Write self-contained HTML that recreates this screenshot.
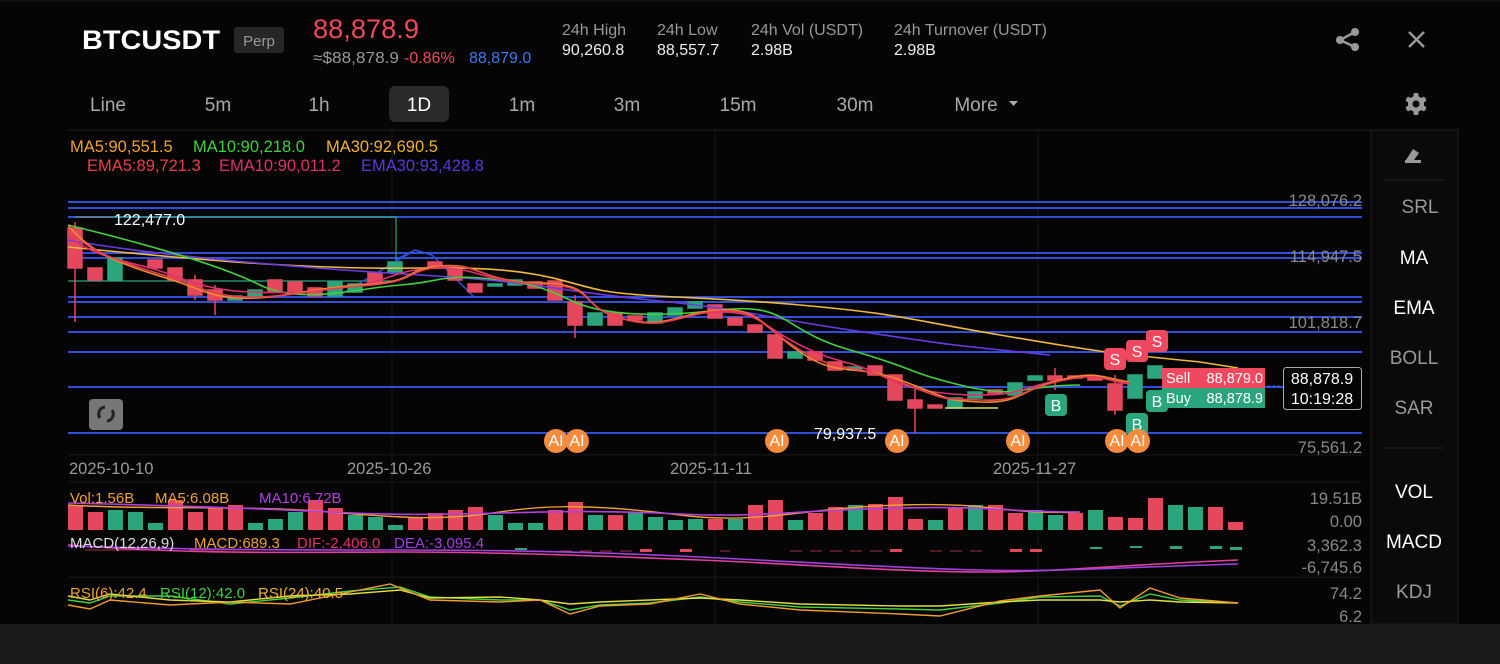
<!DOCTYPE html>
<html><head><meta charset="utf-8"><style>
html,body{margin:0;padding:0;background:#050505;width:1500px;height:664px;overflow:hidden;font-family:"Liberation Sans",Arial,sans-serif}
svg{position:absolute;left:0;top:0}
</style></head><body>
<svg width="1500" height="664" viewBox="0 0 1500 664" font-family="Liberation Sans, Arial, sans-serif">
<rect width="1500" height="664" fill="#050505"/>
<rect x="0" y="624" width="1500" height="40" fill="#1b1b1b"/>
<line x1="0" y1="1" x2="1500" y2="1" stroke="#1c1c1c"/>
<!-- header -->
<text x="82" y="49" font-size="27" font-weight="bold" fill="#fff" textLength="138" lengthAdjust="spacingAndGlyphs">BTCUSDT</text>
<rect x="234" y="27" width="50" height="26" rx="3" fill="#262626"/>
<text x="259" y="46" font-size="15" fill="#999" text-anchor="middle">Perp</text>
<text x="313" y="38" font-size="27" fill="#f0485e" textLength="106" lengthAdjust="spacingAndGlyphs">88,878.9</text>
<text x="313" y="63" font-size="16" fill="#999" textLength="86" lengthAdjust="spacingAndGlyphs">≈$88,878.9</text>
<text x="404" y="63" font-size="16" fill="#f0485e">-0.86%</text>
<text x="469" y="63" font-size="16" fill="#3b7cf0">88,879.0</text>
<g font-size="16"><text x="562" y="35" fill="#999">24h High</text><text x="562" y="55" fill="#eee">90,260.8</text>
<text x="657" y="35" fill="#999">24h Low</text><text x="657" y="55" fill="#eee">88,557.7</text>
<text x="751" y="35" fill="#999">24h Vol (USDT)</text><text x="751" y="55" fill="#eee">2.98B</text>
<text x="894" y="35" fill="#999">24h Turnover (USDT)</text><text x="894" y="55" fill="#eee">2.98B</text></g>
<g fill="#999" stroke="#999"><circle cx="1355" cy="32" r="4" stroke="none"/><circle cx="1355" cy="47" r="4" stroke="none"/><circle cx="1340" cy="40" r="4" stroke="none"/><path d="M1355 32L1340 40L1355 47" stroke-width="2.5" fill="none"/></g>
<path d="M1409 32L1424 47M1424 32L1409 47" stroke="#999" stroke-width="2.5"/>
<!-- tabs -->
<rect x="389" y="86" width="60" height="36" rx="6" fill="#2a2a2a"/>
<g font-size="19" fill="#aaa" text-anchor="middle"><text x="108" y="111">Line</text><text x="218" y="111">5m</text><text x="319" y="111">1h</text><text x="419" y="111" fill="#fff">1D</text><text x="522" y="111">1m</text><text x="627" y="111">3m</text><text x="738" y="111">15m</text><text x="855" y="111">30m</text><text x="976" y="111">More</text></g>
<path d="M1009 101h9l-4.5 5z" fill="#aaa"/>
<g transform="translate(1416,104)" fill="#999"><circle r="8"/><g><rect x="-2.5" y="-11" width="5" height="22" rx="1.5"/><rect x="-2.5" y="-11" width="5" height="22" rx="1.5" transform="rotate(60)"/><rect x="-2.5" y="-11" width="5" height="22" rx="1.5" transform="rotate(120)"/></g><circle r="3.5" fill="#050505"/></g>
<!-- panels -->
<line x1="68" y1="130" x2="1458" y2="130" stroke="#1e1e1e"/>
<rect x="1371" y="130" width="87" height="494" fill="#0a0a0a" stroke="#1e1e1e"/>
<line x1="1384" y1="180" x2="1444" y2="180" stroke="#222"/>
<line x1="1384" y1="448" x2="1444" y2="448" stroke="#222"/>
<path d="M1406 160l7-11 6 4-5 7zM1405 160h16v3h-16z" fill="#999"/>
<g font-size="19" text-anchor="middle" fill="#999"><text x="1420" y="213">SRL</text><text x="1414" y="264" fill="#fff">MA</text><text x="1414" y="314" fill="#fff">EMA</text><text x="1414" y="364">BOLL</text><text x="1414" y="414">SAR</text><text x="1414" y="498" fill="#fff">VOL</text><text x="1414" y="548" fill="#fff">MACD</text><text x="1414" y="598">KDJ</text></g>
<g stroke="#161616"><line x1="392" y1="130" x2="392" y2="624"/><line x1="715" y1="130" x2="715" y2="624"/><line x1="1038" y1="130" x2="1038" y2="624"/><line x1="68" y1="455" x2="1362" y2="455"/><line x1="68" y1="482" x2="1362" y2="482"/><line x1="68" y1="577" x2="1362" y2="577"/></g>
<!-- legends -->
<g font-size="16.5"><text x="70" y="152" fill="#f0a030">MA5:90,551.5</text><text x="193" y="152" fill="#40d040">MA10:90,218.0</text><text x="326" y="152" fill="#f0b030">MA30:92,690.5</text>
<text x="87" y="171" fill="#e8404a">EMA5:89,721.3</text><text x="219" y="171" fill="#e03070">EMA10:90,011.2</text><text x="361" y="171" fill="#5a38d8">EMA30:93,428.8</text></g>
<!-- blue lines -->
<g stroke="#2f4fd8" stroke-width="2"><line x1="68" y1="202" x2="1362" y2="202"/><line x1="68" y1="208" x2="1362" y2="208"/><line x1="68" y1="217" x2="1362" y2="217"/><line x1="68" y1="253" x2="1362" y2="253"/><line x1="68" y1="258" x2="1362" y2="258"/><line x1="68" y1="297" x2="1362" y2="297"/><line x1="68" y1="302" x2="1362" y2="302"/><line x1="68" y1="317" x2="1362" y2="317"/><line x1="68" y1="332" x2="1362" y2="332"/><line x1="68" y1="352" x2="1362" y2="352"/><line x1="68" y1="387" x2="1362" y2="387"/><line x1="68" y1="433" x2="1362" y2="433"/></g>
<g font-size="16.5" fill="#888" text-anchor="end"><text x="1362" y="206">128,076.2</text><text x="1362" y="262">114,947.5</text><text x="1362" y="328">101,818.7</text><text x="1362" y="453">75,561.2</text><text x="1362" y="504">19.51B</text><text x="1362" y="527">0.00</text><text x="1362" y="551">3,362.3</text><text x="1362" y="573">-6,745.6</text><text x="1362" y="599">74.2</text><text x="1362" y="622">6.2</text></g>
<g font-size="16.5" fill="#999"><text x="69" y="474">2025-10-10</text><text x="347" y="474">2025-10-26</text><text x="670" y="474">2025-11-11</text><text x="993" y="474">2025-11-27</text></g>
<path d="M75 217H396V260M68 281H392" stroke="#2aa57e" fill="none" stroke-width="1.2"/>
<path d="M75 217H110" stroke="#888"/>
<text x="114" y="225" font-size="16" fill="#fff">122,477.0</text>
<path d="M335 298L415 250L395 260M415 250L432 255L475 298" stroke="#3050e0" fill="none" stroke-width="1.5"/>
<!-- candles -->
<g fill="#e5485d" stroke="#e5485d" stroke-width="1.5">
<line x1="75" y1="222" x2="75" y2="322"/><rect x="68" y="228" width="14" height="40"/>
<rect x="88" y="268" width="14" height="12"/><rect x="148" y="260" width="14" height="8"/><rect x="168" y="268" width="14" height="12"/>
<line x1="195" y1="275" x2="195" y2="300"/><rect x="188" y="280" width="14" height="15"/><line x1="215" y1="285" x2="215" y2="315"/><rect x="208" y="290" width="14" height="10"/>
<rect x="268" y="280" width="14" height="12"/><rect x="288" y="282" width="14" height="10"/><rect x="308" y="288" width="14" height="8"/><rect x="368" y="273" width="14" height="10"/>
<rect x="428" y="262" width="14" height="6"/><rect x="448" y="268" width="14" height="12"/><rect x="468" y="284" width="14" height="8"/><rect x="528" y="282" width="14" height="6"/>
<rect x="548" y="281" width="14" height="19"/><line x1="575" y1="295" x2="575" y2="338"/><rect x="568" y="302" width="14" height="23"/>
<rect x="608" y="313" width="14" height="12"/><rect x="628" y="316" width="14" height="4"/><rect x="708" y="305" width="14" height="13"/><rect x="728" y="318" width="14" height="7"/>
<rect x="748" y="325" width="14" height="7"/><rect x="768" y="335" width="14" height="23"/><rect x="808" y="352" width="14" height="8"/><rect x="828" y="362" width="14" height="8"/>
<rect x="868" y="366" width="14" height="9"/><rect x="888" y="375" width="14" height="25"/><line x1="915" y1="385" x2="915" y2="433"/><rect x="908" y="400" width="14" height="8"/>
<rect x="928" y="405" width="14" height="3"/><rect x="988" y="390" width="14" height="3"/><rect x="1048" y="376" width="14" height="4"/><line x1="1055" y1="368" x2="1055" y2="390"/>
<rect x="1068" y="376" width="14" height="2"/><rect x="1088" y="378" width="14" height="2"/><line x1="1115" y1="375" x2="1115" y2="415"/><rect x="1108" y="384" width="14" height="26"/></g>
<g fill="#2aa57e" stroke="#2aa57e" stroke-width="1.5">
<rect x="108" y="258" width="14" height="22"/><rect x="228" y="296" width="14" height="4"/><rect x="248" y="290" width="14" height="6"/><rect x="328" y="282" width="14" height="14"/>
<rect x="348" y="284" width="14" height="8"/><rect x="388" y="262" width="14" height="10"/><rect x="488" y="284" width="14" height="2"/><rect x="508" y="280" width="14" height="5"/>
<rect x="588" y="313" width="14" height="12"/><rect x="648" y="313" width="14" height="10"/><rect x="668" y="308" width="14" height="7"/><rect x="688" y="302" width="14" height="6"/>
<rect x="788" y="352" width="14" height="6"/><rect x="848" y="367" width="14" height="3"/><rect x="948" y="398" width="14" height="10"/><rect x="968" y="392" width="14" height="6"/>
<rect x="1008" y="383" width="14" height="12"/><rect x="1028" y="376" width="14" height="4"/><rect x="1128" y="375" width="14" height="23"/><rect x="1148" y="366" width="14" height="12"/></g>
<!-- MA lines -->
<g fill="none" stroke-width="1.6">
<path d="M68 247C180 258 300 270 420 268S560 282 600 290 700 296 800 305 900 318 1000 335 1100 352 1200 362L1238 368" stroke="#f0b93a"/>
<path d="M68 240C150 255 300 268 420 275S550 290 650 300 750 315 850 330 950 345 1050 355 1150 358L1238 363" stroke="#6a3ae8"/>
<path d="M68 225C150 245 220 265 260 285S360 288 400 285 440 275 480 278 540 285 570 300 650 318 720 310 780 330 850 350 900 370 960 385 1020 385 1080 385 1140 378L1200 372" stroke="#40d040"/>
<path d="M68 235C90 255 120 260 150 268S200 290 250 292 330 290 360 285 400 268 440 268 480 282 540 283 575 305 620 318 680 312 720 312 760 325 800 345 850 360 880 375 940 395 980 395 1020 388 1060 380 1100 380 1130 384 1160 376L1200 370" stroke="#e03070"/>
<path d="M68 225C100 265 150 270 200 290S300 288 360 285 400 270 440 266 480 282 540 283 575 305 620 318 680 312 720 310 760 325 800 352 850 362 900 380 940 400 980 402 1020 390 1060 380 1100 378 1130 382 1160 375L1200 370" stroke="#f08a30"/>
<path d="M68 230C100 262 150 268 200 288S300 290 360 286 400 272 440 267 480 282 540 284 575 304 620 318 680 313 720 311 760 326 800 350 850 362 900 382 940 398 980 400 1020 390 1060 381 1100 380 1130 383 1160 376L1200 371" stroke="#e8404a"/>
</g>
<path d="M945 408H998" stroke="#e0e060" stroke-width="1.5"/>
<path d="M1238 386H1280" stroke="#4a6fe0" stroke-dasharray="2 3"/>
<!-- markers -->
<g font-size="16" fill="#fff" text-anchor="middle">
<g fill="#f0485e"><rect x="1104" y="348" width="22" height="22" rx="4"/><rect x="1126" y="340" width="22" height="22" rx="4"/><rect x="1146" y="330" width="22" height="22" rx="4"/></g>
<text x="1115" y="365">S</text><text x="1137" y="357">S</text><text x="1157" y="347">S</text>
<g fill="#2aa57e"><rect x="1045" y="394" width="22" height="22" rx="4"/><rect x="1146" y="390" width="22" height="22" rx="4"/><rect x="1126" y="413" width="22" height="22" rx="4"/></g>
<text x="1056" y="411">B</text><text x="1157" y="407">B</text><text x="1137" y="430">B</text>
<g fill="#f58b3c"><circle cx="556" cy="441" r="12"/><circle cx="577" cy="441" r="12"/><circle cx="777" cy="441" r="12"/><circle cx="897" cy="441" r="12"/><circle cx="1018" cy="441" r="12"/><circle cx="1117" cy="441" r="12"/><circle cx="1138" cy="441" r="12"/></g>
<text x="556" y="446">AI</text><text x="577" y="446">AI</text><text x="777" y="446">AI</text><text x="897" y="446">AI</text><text x="1018" y="446">AI</text><text x="1117" y="446">AI</text><text x="1138" y="446">AI</text>
</g>
<text x="814" y="439" font-size="16" fill="#fff">79,937.5</text>
<rect x="1162" y="368" width="103" height="20" fill="#f0485e"/><rect x="1162" y="388" width="103" height="20" fill="#2aa57e"/>
<g font-size="14.5" fill="#fff"><text x="1166" y="383">Sell</text><text x="1263" y="383" text-anchor="end">88,879.0</text><text x="1166" y="403">Buy</text><text x="1263" y="403" text-anchor="end">88,878.9</text></g>
<rect x="1283.5" y="367.5" width="78" height="42" rx="3" fill="#050505" stroke="#aaa"/>
<g font-size="16" fill="#fff" text-anchor="middle"><text x="1322" y="384">88,878.9</text><text x="1322" y="404">10:19:28</text></g>
<rect x="89" y="399" width="34" height="31" rx="4" fill="#777"/>
<path d="M100 418a7 7 0 0 1 5-11M112 410a7 7 0 0 1-5 11" stroke="#222" stroke-width="3" fill="none"/>
<!-- volume -->
<g fill="#e5485d">
<rect x="68" y="505" width="15" height="25"/><rect x="88" y="512" width="15" height="18"/><rect x="168" y="500" width="15" height="30"/><rect x="188" y="512" width="15" height="18"/><rect x="208" y="508" width="15" height="22"/><rect x="228" y="505" width="15" height="25"/><rect x="308" y="500" width="15" height="30"/><rect x="328" y="508" width="15" height="22"/><rect x="408" y="517" width="15" height="13"/><rect x="428" y="513" width="15" height="17"/><rect x="448" y="510" width="15" height="20"/><rect x="468" y="507" width="15" height="23"/><rect x="548" y="510" width="15" height="20"/><rect x="568" y="502" width="15" height="28"/><rect x="608" y="515" width="15" height="15"/><rect x="708" y="519" width="15" height="11"/><rect x="748" y="505" width="15" height="25"/><rect x="768" y="500" width="15" height="30"/><rect x="808" y="513" width="15" height="17"/><rect x="828" y="507" width="15" height="23"/><rect x="868" y="504" width="15" height="26"/><rect x="888" y="497" width="15" height="33"/><rect x="908" y="519" width="15" height="11"/><rect x="948" y="507" width="15" height="23"/><rect x="988" y="505" width="15" height="25"/><rect x="1008" y="513" width="15" height="17"/><rect x="1068" y="513" width="15" height="17"/><rect x="1108" y="517" width="15" height="13"/><rect x="1128" y="518" width="15" height="12"/><rect x="1148" y="498" width="15" height="32"/><rect x="1208" y="507" width="15" height="23"/><rect x="1228" y="522" width="15" height="8"/></g>
<g fill="#2aa57e">
<rect x="108" y="510" width="15" height="20"/><rect x="128" y="512" width="15" height="18"/><rect x="148" y="523" width="15" height="7"/><rect x="248" y="523" width="15" height="7"/><rect x="268" y="519" width="15" height="11"/><rect x="288" y="512" width="15" height="18"/><rect x="348" y="515" width="15" height="15"/><rect x="368" y="517" width="15" height="13"/><rect x="388" y="525" width="15" height="5"/><rect x="488" y="515" width="15" height="15"/><rect x="508" y="523" width="15" height="7"/><rect x="528" y="523" width="15" height="7"/><rect x="588" y="515" width="15" height="15"/><rect x="628" y="513" width="15" height="17"/><rect x="648" y="517" width="15" height="13"/><rect x="668" y="520" width="15" height="10"/><rect x="688" y="519" width="15" height="11"/><rect x="728" y="519" width="15" height="11"/><rect x="788" y="520" width="15" height="10"/><rect x="848" y="505" width="15" height="25"/><rect x="928" y="520" width="15" height="10"/><rect x="968" y="505" width="15" height="25"/><rect x="1028" y="510" width="15" height="20"/><rect x="1048" y="515" width="15" height="15"/><rect x="1088" y="510" width="15" height="20"/><rect x="1168" y="505" width="15" height="25"/><rect x="1188" y="507" width="15" height="23"/></g>
<path d="M68 505C150 510 250 505 330 512S450 520 500 512 600 505 680 515 800 508 900 505 1000 515 1080 512 1200 510L1238 518" stroke="#f0a030" fill="none" stroke-width="1.4"/>
<path d="M68 503C150 505 250 508 330 512S450 514 500 513 600 510 680 514 800 510 900 508 1000 512 1080 512 1200 514L1238 517" stroke="#b040e0" fill="none" stroke-width="1.6"/>
<g font-size="15"><text x="70" y="503" fill="#f0a030">Vol:1.56B</text><text x="155" y="503" fill="#f0a030">MA5:6.08B</text><text x="259" y="503" fill="#b040e0">MA10:6.72B</text></g>
<!-- macd -->
<g fill="none" stroke="#a03040"><path d="M85 550H160M190 550H260M300 550H340M560 551h12M580 551h12M600 551h12M620 551h12M720 551h10M790 551h12M810 551h12M830 551h12M850 551h12M870 551h12M930 551h12M950 551h12M970 551h12"/></g>
<g fill="#e5485d"><rect x="640" y="549" width="12" height="3"/><rect x="680" y="549" width="12" height="3"/><rect x="890" y="549" width="12" height="3"/><rect x="1010" y="549" width="12" height="3"/><rect x="1030" y="549" width="12" height="3"/></g>
<g fill="#2aa57e"><rect x="515" y="548" width="12" height="2"/><rect x="1090" y="547" width="12" height="2"/><rect x="1130" y="546" width="12" height="2"/><rect x="1170" y="546" width="12" height="3"/><rect x="1210" y="546" width="12" height="3"/><rect x="1230" y="547" width="12" height="3"/></g>
<path d="M68 545C200 555 300 552 400 552S600 556 700 560 900 572 980 572 1100 566 1238 560" stroke="#e040a0" fill="none" stroke-width="1.6"/>
<path d="M68 546C200 550 300 550 400 550S600 552 700 557 900 568 980 570 1100 568 1238 564" stroke="#a040e0" fill="none" stroke-width="1.6"/>
<g font-size="15"><text x="70" y="548" fill="#ddd">MACD(12,26,9)</text><text x="194" y="548" fill="#f0a030">MACD:689.3</text><text x="297" y="548" fill="#e03070">DIF:-2,406.0</text><text x="394" y="548" fill="#a040e0">DEA:-3,095.4</text></g>
<!-- rsi -->
<path d="M68 600L90 603 110 596 170 596 230 604 290 598 350 591 400 587 430 597 500 600 540 600 570 610 600 605 650 603 700 597 740 602 800 607 900 609 940 610 1000 603 1040 597 1100 596 1120 606 1150 594 1180 600 1238 603" stroke="#40d040" fill="none" stroke-width="1.4"/>
<path d="M68 596L90 600 110 594 170 600 230 602 290 596 350 594 400 590 430 598 500 597 540 600 570 604 600 602 650 600 700 598 740 600 800 604 900 606 940 606 1000 602 1040 600 1100 600 1120 602 1150 600 1180 602 1238 603" stroke="#e0e040" fill="none" stroke-width="1.4"/>
<path d="M68 605L90 609 110 600 170 605 230 602 290 604 350 592 390 584 430 600 500 602 540 600 570 614 600 606 650 604 700 594 740 604 800 610 900 614 940 616 1000 601 1040 596 1100 590 1120 608 1150 588 1180 598 1238 603" stroke="#f09a30" fill="none" stroke-width="1.4"/>
<g font-size="15"><text x="70" y="598" fill="#f0a030">RSI(6):42.4</text><text x="160" y="598" fill="#40d040">RSI(12):42.0</text><text x="258" y="598" fill="#f0b030">RSI(24):40.5</text></g>
</svg>
</body></html>
